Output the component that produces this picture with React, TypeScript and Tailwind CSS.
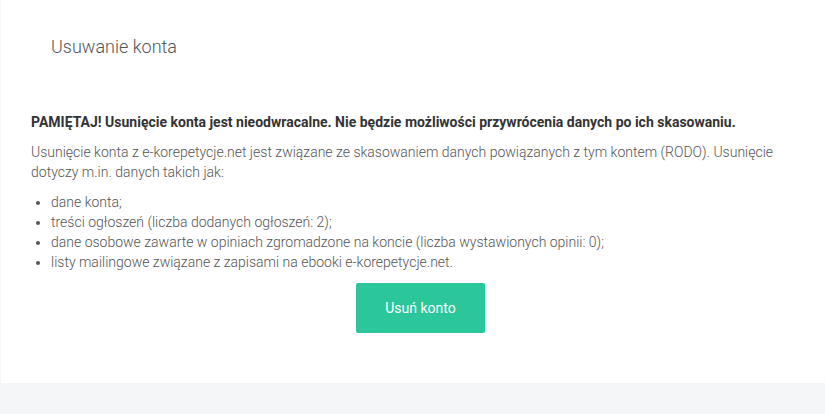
export default function App() {
  const items = [
    'dane konta;',
    'treści ogłoszeń (liczba dodanych ogłoszeń: 2);',
    'dane osobowe zawarte w opiniach zgromadzone na koncie (liczba wystawionych opinii: 0);',
    'listy mailingowe związane z zapisami na ebooki e-korepetycje.net.',
  ];

  return (
    <div className="min-h-[414px] bg-[#f5f6f8] pl-px font-['Roboto',sans-serif]">
      <section className="bg-white px-[30px] pt-[35px] pb-[50px]">
        <h1 className="ml-5 text-[18px] leading-6 font-light text-[#555]">Usuwanie konta</h1>

        <p className="mt-[53px] text-[14px] leading-5 font-bold text-[#333]">
          PAMIĘTAJ! Usunięcie konta jest nieodwracalne. Nie będzie możliwości przywrócenia danych po ich skasowaniu.
        </p>
        <p className="mt-[10px] text-[14px] leading-5 font-light text-[#555]">
          Usunięcie konta z e-korepetycje.net jest związane ze skasowaniem danych powiązanych z tym kontem (RODO). Usunięcie
          dotyczy m.in. danych takich jak:
        </p>
        <ul className="mt-[10px] list-disc pl-5 text-[14px] leading-5 font-light text-[#555]">
          {items.map((it) => (
            <li key={it}>{it}</li>
          ))}
        </ul>

        <div className="mt-[11px] flex pl-[325px]">
          <button className="h-[50px] w-[129px] rounded-[2px] bg-[#2bc69a] text-[14px] font-normal text-white">
            Usuń konto
          </button>
        </div>
      </section>
    </div>
  );
}
